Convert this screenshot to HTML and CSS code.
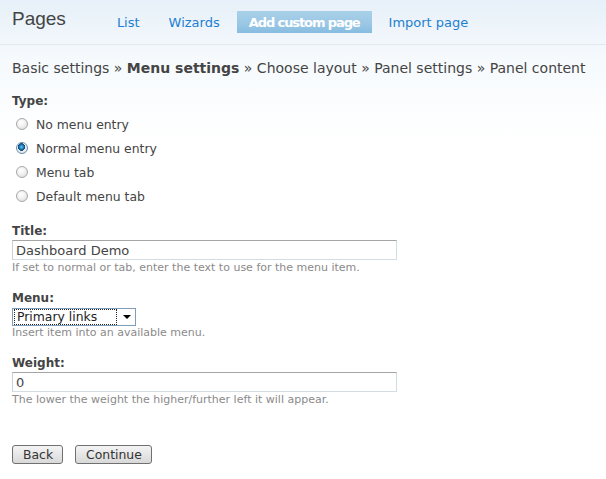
FILE: index.html
```html
<!DOCTYPE html>
<html>
<head>
<meta charset="utf-8">
<link rel="stylesheet" href="styles.css">
</head>
<body>
<header class="header">
  <h1 class="site-title">Pages</h1>
  <ul class="tabs">
    <li><a class="tab" href="#">List</a></li>
    <li><a class="tab" href="#">Wizards</a></li>
    <li><a class="tab active" href="#">Add custom page</a></li>
    <li><a class="tab" href="#">Import page</a></li>
  </ul>
</header>
<main class="main">
  <div class="breadcrumb">Basic settings » <strong>Menu settings</strong> » Choose layout » Panel settings » Panel content</div>
  <form class="form">
    <div class="field">
      <div class="label">Type:</div>
      <div class="radios">
        <label class="radio"><input type="radio" name="type"> No menu entry</label>
        <label class="radio"><input type="radio" name="type" checked> Normal menu entry</label>
        <label class="radio"><input type="radio" name="type"> Menu tab</label>
        <label class="radio"><input type="radio" name="type"> Default menu tab</label>
      </div>
    </div>
    <div class="field">
      <div class="label">Title:</div>
      <input class="text" type="text" value="Dashboard Demo">
      <div class="desc">If set to normal or tab, enter the text to use for the menu item.</div>
    </div>
    <div class="field">
      <div class="label">Menu:</div>
      <div class="select">
        <span class="select-value">Primary links</span>
        <span class="select-arrow"></span>
      </div>
      <div class="desc">Insert item into an available menu.</div>
    </div>
    <div class="field">
      <div class="label">Weight:</div>
      <input class="text" type="text" value="0">
      <div class="desc">The lower the weight the higher/further left it will appear.</div>
    </div>
    <div class="buttons">
      <button class="btn" type="button">Back</button>
      <button class="btn" type="button">Continue</button>
    </div>
  </form>
</main>
</body>
</html>
```

FILE: styles.css
```css
html, body {
  margin: 0;
  padding: 0;
}
body {
  width: 606px;
  height: 479px;
  overflow: hidden;
  font-family: "DejaVu Sans", Verdana, sans-serif;
  color: #444;
  background: linear-gradient(#e7f0f8 0, #f2f7fc 44px, #f6fafd 60px, #ffffff 140px);
}
.header {
  display: flex;
  align-items: center;
  height: 44px;
  padding-left: 12px;
  border-bottom: 1px solid #e2e9f0;
  box-sizing: content-box;
}
.site-title {
  margin: 0 39px 0 0;
  font-family: "Liberation Sans", Arial, sans-serif;
  font-weight: normal;
  font-size: 19px;
  color: #444;
  line-height: 22px;
  position: relative;
  top: -3px;
}
.tabs {
  display: flex;
  gap: 5px;
  list-style: none;
  margin: 0;
  padding: 0;
}
.tab {
  display: block;
  height: 22px;
  line-height: 23px;
  padding: 0 12px;
  font-size: 13px;
  color: #1d7fd1;
  text-decoration: none;
}
.tab.active {
  color: #fff;
  font-weight: bold;
  letter-spacing: -1.1px;
  padding: 0 12px;
  background: linear-gradient(#a9d0e8, #9ac7e5 60%, #86bce0);
}
.main {
  padding: 0 12px;
}
.breadcrumb {
  margin-top: 13px;
  line-height: 20px;
  font-size: 14px;
  color: #444;
  white-space: nowrap;
}
.breadcrumb strong {
  color: #444;
}
.form {
  margin: 0;
}
.field {
  margin-top: 15px;
}
.label {
  font-size: 12px;
  font-weight: bold;
  line-height: 16px;
  color: #444;
}
.radios {
  margin-top: 3px;
  margin-bottom: 11px;
}
.radio {
  display: flex;
  align-items: center;
  height: 24px;
  font-size: 12.4px;
  color: #444;
}
.radio input {
  appearance: none;
  -webkit-appearance: none;
  width: 12px;
  height: 12px;
  margin: 0 8px 0 4px;
  border-radius: 50%;
  border: 1px solid #a7a7a7;
  background: radial-gradient(circle at 40% 35%, #ffffff 0, #f3f3f3 40%, #d6d6d6 100%);
  box-sizing: border-box;
}
.radio input:checked {
  border-color: #6f8ea8;
  background:
    radial-gradient(circle at 45% 40%, #6fc3ee 0, #1a78b8 28%, #0c3f66 44%, transparent 48%),
    radial-gradient(circle at 40% 35%, #ffffff 0, #eef2f5 50%, #c9d2d9 100%);
}
.text {
  display: block;
  margin: 1px 0 0;
  width: 385px;
  height: 20px;
  box-sizing: border-box;
  padding: 0 3px;
  font-family: "DejaVu Sans", Verdana, sans-serif;
  font-size: 13px;
  color: #444;
  border: 1px solid #d3dbe3;
  border-top-color: #a5a5a5;
  border-left-color: #c9d0d7;
  background: #fff;
  outline: none;
}
.desc {
  margin-top: 1px;
  font-size: 11px;
  line-height: 14px;
  color: #8a8a8a;
}
.select {
  display: flex;
  align-items: center;
  margin-top: 2px;
  width: 124px;
  height: 18px;
  box-sizing: border-box;
  border: 1px solid #7f9db9;
  background: #fff;
}
.select + .desc {
  margin-top: 0;
}
.select-value {
  flex: 1;
  height: 14px;
  line-height: 14px;
  margin-left: 1px;
  padding-left: 2px;
  border: 1px dotted #222;
  font-size: 12.4px;
  color: #222;
}
.select-arrow {
  width: 18px;
  height: 100%;
  position: relative;
}
.select-arrow::after {
  content: "";
  position: absolute;
  left: 6px;
  top: 6px;
  border-left: 4px solid transparent;
  border-right: 4px solid transparent;
  border-top: 4px solid #000;
}
.buttons {
  display: flex;
  gap: 12px;
  margin-top: 38px;
}
.btn {
  height: 19px;
  padding: 0 9px 0 10px;
  font-family: "DejaVu Sans", Verdana, sans-serif;
  font-size: 12.4px;
  color: #333;
  border: 1px solid #707070;
  border-radius: 3px;
  background: linear-gradient(#f4f4f4, #e6e6e6 50%, #d9d9d9);
  line-height: 17px;
}
```
